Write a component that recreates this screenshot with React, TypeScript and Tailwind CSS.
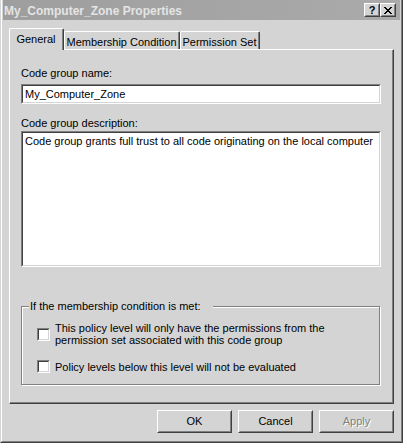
import React from "react";

const font = { fontFamily: '"Liberation Sans", Arial, sans-serif' };

const Raised = ({ className = "", children }: { className?: string; children?: React.ReactNode }) => (
  <div className={"border border-t-white border-l-white border-r-[#404040] border-b-[#404040] " + className}>
    <div className="w-full h-full border border-t-[#d4d4d4] border-l-[#d4d4d4] border-r-[#808080] border-b-[#808080] flex items-center justify-center">
      {children}
    </div>
  </div>
);

const Sunken = ({ className = "", innerClass = "", children }: { className?: string; innerClass?: string; children?: React.ReactNode }) => (
  <div className={"border border-t-[#808080] border-l-[#808080] border-r-white border-b-white " + className}>
    <div className={"w-full h-full border border-t-[#404040] border-l-[#404040] border-r-[#d4d4d4] border-b-[#d4d4d4] bg-white " + innerClass}>
      {children}
    </div>
  </div>
);

const Check = ({ children }: { children: React.ReactNode }) => (
  <div className="flex items-center gap-[5px]">
    <Sunken className="w-[13px] h-[13px] shrink-0" />
    <div className="leading-[12px]">{children}</div>
  </div>
);

const Tab = ({ label, w, active }: { label: string; w: string; active?: boolean }) =>
  active ? (
    <div
      className={
        "relative z-10 h-[22px] -mb-px bg-[#d4d4d4] border-t border-l border-r border-t-white border-l-white border-r-[#404040] rounded-tl-[2px] rounded-tr-[2px] " +
        w
      }
    >
      <div className="h-full border-r border-r-[#808080] flex justify-center pt-[4px] leading-[13px]">{label}</div>
    </div>
  ) : (
    <div
      className={
        "h-[18px] border-t border-l border-r border-t-white border-l-white border-r-[#404040] rounded-tl-[2px] rounded-tr-[2px] " +
        w
      }
    >
      <div className="h-full border-r border-r-[#808080] flex justify-center pt-[4px] leading-[13px]">{label}</div>
    </div>
  );

export default function App() {
  return (
    <div
      style={font}
      className="w-[403px] h-[443px] bg-[#d4d4d4] text-[11px] text-black border-l border-r border-b border-l-[#d4d4d4] border-r-[#404040] border-b-[#404040] flex flex-col"
    >
      <div className="flex-1 flex flex-col border-l border-r border-b border-l-white border-r-[#808080] border-b-[#808080] px-px">
        {/* title bar */}
        <div className="h-[20px] shrink-0 bg-gradient-to-r from-[#9e9e9e] to-[#aaaaaa] flex items-start justify-between pl-[1px] pr-[4px]">
          <div className="pt-[5px] leading-[13px] font-bold text-[12px] text-[#e4e4e4]">My_Computer_Zone Properties</div>
          <div className="flex mt-[3px]">
            <Raised className="w-[16px] h-[14px] bg-[#d4d4d4]">
              <span className="font-bold text-[11px] leading-[10px]">?</span>
            </Raised>
            <Raised className="w-[16px] h-[14px] bg-[#d4d4d4]">
              <svg width="8" height="7" viewBox="0 0 8 7" shapeRendering="crispEdges">
                <path d="M0 0h2v1h-2zM6 0h2v1h-2zM1 1h2v1h-2zM5 1h2v1h-2zM2 2h4v1h-4zM3 3h2v1h-2zM2 4h4v1h-4zM1 5h2v1h-2zM5 5h2v1h-2zM0 6h2v1h-2zM6 6h2v1h-2z" fill="#000" />
              </svg>
            </Raised>
          </div>
        </div>

        {/* body */}
        <div className="flex-1 flex flex-col pt-[8px] pl-[6px] pr-[6px]">
          <div className="flex items-end h-[21px]">
            <Tab label="General" w="w-[55px]" active />
            <Tab label="Membership Condition" w="w-[116px]" />
            <Tab label="Permission Set" w="w-[80px]" />
          </div>

          <div className="h-[355px] border-t border-l border-r border-b border-t-white border-l-white border-r-[#404040] border-b-[#404040]">
            <div className="h-full border-r border-b border-r-[#808080] border-b-[#808080] pt-[17px] px-[11px] flex flex-col">
              <div className="leading-[13px]">Code group name:</div>
              <Sunken className="mt-[4px] h-[20px]" innerClass="flex items-center pl-[2px] leading-[13px]">
                My_Computer_Zone
              </Sunken>

              <div className="leading-[13px] mt-[13px]">Code group description:</div>
              <Sunken className="mt-[1px] h-[136px]" innerClass="pl-[2px] pt-[2px] leading-[13px]">
                Code group grants full trust to all code originating on the local computer
              </Sunken>

              <div className="relative mt-[39px] w-[359px] h-[79px] border border-[#808080] shadow-[1px_1px_0_white,inset_1px_1px_0_white] pt-[15px] pl-[15px]">
                <div className="absolute left-[7px] -top-[7px] w-[184px] pl-px bg-[#d4d4d4] leading-[13px]">
                  If the membership condition is met:
                </div>
                <Check>
                  This policy level will only have the permissions from the
                  <br />
                  permission set associated with this code group
                </Check>
                <div className="mt-[14px]">
                  <Check>Policy levels below this level will not be evaluated</Check>
                </div>
              </div>
            </div>
          </div>

          <div className="mt-[6px] flex justify-end gap-[6px]">
            <Raised className="w-[75px] h-[23px]">OK</Raised>
            <Raised className="w-[75px] h-[23px]">Cancel</Raised>
            <Raised className="w-[75px] h-[23px]">
              <span className="text-[#808080] [text-shadow:1px_1px_0_white]">Apply</span>
            </Raised>
          </div>
        </div>
      </div>
    </div>
  );
}
